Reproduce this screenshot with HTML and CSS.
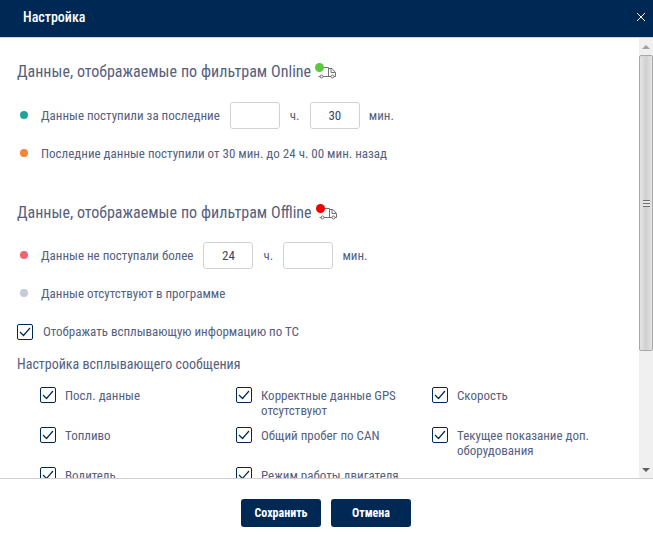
FILE: index.html
```html
<!DOCTYPE html>
<html lang="ru">
<head>
<meta charset="utf-8">
<title>Настройка</title>
<link rel="stylesheet" href="styles.css">
</head>
<body>
<div class="dialog">
  <header class="head">
    <span class="head-title">Настройка</span>
    <svg class="close" width="10" height="10" viewBox="0 0 10 10"><path d="M1 1l8 8M9 1l-8 8" stroke="#fff" stroke-width="1" fill="none"/></svg>
  </header>
  <div class="middle">
    <main class="content">
      <h2 class="section-title first"><span>Данные, отображаемые по фильтрам Online</span>
        <span class="truck"><svg width="22" height="16" viewBox="0 0 22 16"><g fill="none" stroke="#707070" stroke-width="1"><path d="M3.5 4.5h10v8.5M3.5 13.5h2M8 13.5h8M19 13.5h1.500v-4l-3.500-4h-3.500"/><path d="M16 6v3.500h4"/><circle cx="6.500" cy="13.500" r="1.500"/><circle cx="17.500" cy="13.500" r="1.500"/></g></svg><i class="dot-on green"></i></span>
      </h2>
      <div class="row r1">
        <i class="dot teal"></i><span>Данные поступили за последние</span>
        <span class="field"></span><span class="unit">ч.</span><span class="field">30</span><span class="unit">мин.</span>
      </div>
      <div class="row r2"><i class="dot orange"></i><span>Последние данные поступили от 30 мин. до 24 ч. 00 мин. назад</span></div>
      <h2 class="section-title second"><span>Данные, отображаемые по фильтрам Offline</span>
        <span class="truck"><svg width="22" height="16" viewBox="0 0 22 16"><g fill="none" stroke="#707070" stroke-width="1"><path d="M3.5 4.5h10v8.5M3.5 13.5h2M8 13.5h8M19 13.5h1.500v-4l-3.500-4h-3.500"/><path d="M16 6v3.500h4"/><circle cx="6.500" cy="13.500" r="1.500"/><circle cx="17.500" cy="13.500" r="1.500"/></g></svg><i class="dot-on red"></i></span>
      </h2>
      <div class="row r1b">
        <i class="dot coral"></i><span>Данные не поступали более</span>
        <span class="field">24</span><span class="unit">ч.</span><span class="field"></span><span class="unit">мин.</span>
      </div>
      <div class="row r2b"><i class="dot grey"></i><span>Данные отсутствуют в программе</span></div>
      <label class="check main-check"><i class="box"><svg width="12" height="10" viewBox="0 0 12 10"><path d="M1 5l3.500 3.500L11 1" fill="none" stroke="#002855" stroke-width="1.2"/></svg></i><span>Отображать всплывающую информацию по ТС</span></label>
      <div class="sub-title">Настройка всплывающего сообщения</div>
      <div class="grid">
        <label class="check"><i class="box"><svg width="12" height="10" viewBox="0 0 12 10"><path d="M1 5l3.500 3.500L11 1" fill="none" stroke="#002855" stroke-width="1.2"/></svg></i><span>Посл. данные</span></label>
        <label class="check"><i class="box"><svg width="12" height="10" viewBox="0 0 12 10"><path d="M1 5l3.500 3.500L11 1" fill="none" stroke="#002855" stroke-width="1.2"/></svg></i><span>Корректные данные GPS отсутствуют</span></label>
        <label class="check"><i class="box"><svg width="12" height="10" viewBox="0 0 12 10"><path d="M1 5l3.500 3.500L11 1" fill="none" stroke="#002855" stroke-width="1.2"/></svg></i><span>Скорость</span></label>
        <label class="check"><i class="box"><svg width="12" height="10" viewBox="0 0 12 10"><path d="M1 5l3.500 3.500L11 1" fill="none" stroke="#002855" stroke-width="1.2"/></svg></i><span>Топливо</span></label>
        <label class="check"><i class="box"><svg width="12" height="10" viewBox="0 0 12 10"><path d="M1 5l3.500 3.500L11 1" fill="none" stroke="#002855" stroke-width="1.2"/></svg></i><span>Общий пробег по CAN</span></label>
        <label class="check"><i class="box"><svg width="12" height="10" viewBox="0 0 12 10"><path d="M1 5l3.500 3.500L11 1" fill="none" stroke="#002855" stroke-width="1.2"/></svg></i><span>Текущее показание доп. оборудования</span></label>
        <label class="check"><i class="box"><svg width="12" height="10" viewBox="0 0 12 10"><path d="M1 5l3.500 3.500L11 1" fill="none" stroke="#002855" stroke-width="1.2"/></svg></i><span>Водитель</span></label>
        <label class="check"><i class="box"><svg width="12" height="10" viewBox="0 0 12 10"><path d="M1 5l3.500 3.500L11 1" fill="none" stroke="#002855" stroke-width="1.2"/></svg></i><span>Режим работы двигателя</span></label>
      </div>
    </main>
    <div class="scrollbar">
      <div class="arrow up"></div>
      <div class="thumb"><i class="grip"></i></div>
      <div class="track"></div>
      <div class="arrow down"></div>
    </div>
  </div>
  <footer class="foot">
    <button class="btn">Сохранить</button>
    <button class="btn">Отмена</button>
  </footer>
</div>
</body>
</html>
```
FILE: styles.css
```css
* { box-sizing: border-box; }
html, body { margin: 0; height: 100%; overflow: hidden; }
body { font-family: Roboto, "Liberation Sans", sans-serif; font-stretch: 75%; color: #55607e; background: #fff; }
.dialog { height: 534px; display: flex; flex-direction: column; }
.head { height: 38px; flex: none; background: #002855; border-bottom: 1px solid #d4d4d4; display: flex; align-items: center; justify-content: space-between; padding: 0 7px 3px 23px; }
.head-title { color: #fff; font-size: 14px; font-weight: 500; }
.close { display: block; }
.middle { flex: none; height: 440px; display: flex; overflow: hidden; }
.content { flex: 1; min-width: 0; padding: 0 0 0 17px; overflow: hidden; }
.section-title { margin: 0; font-size: 16px; font-weight: 400; line-height: 20px; word-spacing: 0.25px; display: flex; align-items: flex-start; gap: 4px; white-space: nowrap; }
.section-title.first { margin-top: 24px; }
.section-title.second { margin-top: 40px; }
.truck { position: relative; display: block; width: 22px; height: 16px; margin-top: 1px; }
.truck svg { display: block; }
.dot-on { position: absolute; left: 0; top: 0; width: 9px; height: 9px; border-radius: 50%; }
.green { background: #5cc93f; }
.red { background: #f00000; }
.row { display: flex; align-items: center; font-size: 13px; white-space: nowrap; }
.r1 { height: 28px; margin-top: 19px; }
.r2 { height: 20px; margin-top: 14px; }
.r1b { height: 28px; margin-top: 18px; }
.r2b { height: 20px; margin-top: 14px; }
.dot { width: 8px; height: 8px; border-radius: 50%; margin: 0 13px 0 3px; flex: none; }
.teal { background: #22a39a; }
.orange { background: #f58434; }
.coral { background: #ee6470; }
.grey { background: #c3ccd6; }
.field { width: 50px; height: 27px; border: 1px solid #d2d2d2; border-radius: 3px; margin-left: 10px; display: flex; align-items: center; justify-content: center; color: #3a4660; }
.unit { margin-left: 10px; width: 10px; }
.unit:last-child { width: auto; margin-left: 9px; }
.check { display: flex; align-items: flex-start; font-size: 13px; line-height: 15px; }
.box { flex: none; width: 16px; height: 16px; border: 1px solid #002855; border-radius: 2px; margin-right: 9px; display: flex; align-items: center; justify-content: center; }
.box svg { display: block; }
.main-check { margin-top: 21px; }
.main-check .box { margin-right: 10px; }
.sub-title { font-size: 14px; line-height: 16px; margin-top: 16px; }
.grid { display: grid; grid-template-columns: 196px 196px 170px; grid-auto-rows: 30px; margin: 15px 0 0 23px; row-gap: 10px; }
.grid .check span { padding-top: 1px; }
.scrollbar { flex: none; width: 14px; display: flex; flex-direction: column; background: #f0f0f0; }
.arrow { flex: none; height: 17px; display: flex; align-items: center; justify-content: center; }
.arrow::before { content: ""; border-left: 4px solid transparent; border-right: 4px solid transparent; }
.up::before { border-bottom: 4px solid #a0a0a0; }
.down::before { border-top: 4px solid #606060; }
.thumb { flex: none; height: 296px; border: 1px solid #a8a8a8; border-radius: 2px; background: linear-gradient(90deg, #e4e4e4, #d0d0d0 50%, #e4e4e4); display: flex; align-items: center; justify-content: center; }
.grip { width: 7px; height: 7px; background: repeating-linear-gradient(180deg, #707070 0 1px, #e8e8e8 1px 3px); }
.track { flex: 1; }
.foot { flex: 1; border-top: 1px solid #cfcfcf; display: flex; justify-content: center; align-items: flex-start; gap: 10px; padding: 20px 1px 0 0; }
.btn { width: 80px; height: 28px; background: #002855; color: #fff; border: 0; border-radius: 3px; font-family: inherit; font-stretch: inherit; font-size: 12px; font-weight: 700; padding: 0; }
```
